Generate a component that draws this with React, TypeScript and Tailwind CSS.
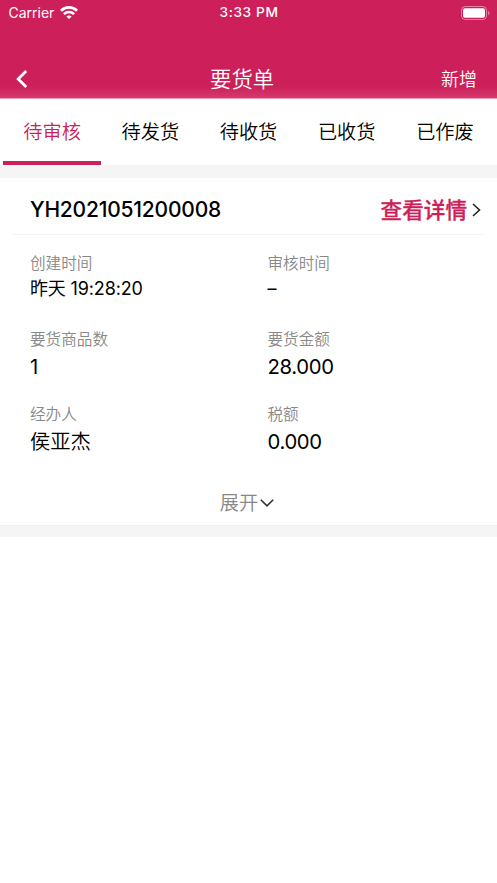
import type { ReactNode } from "react";

const tabs = ["待审核", "待发货", "待收货", "已收货", "已作废"];

const WifiIcon = () => (
  <svg className="h-[13px] w-[18px]" viewBox="0 0 18 13" fill="none" stroke="#fff" strokeWidth="2.7">
    <path d="M0.9 4.7C5.4 0.3 12.6 0.3 17.1 4.7" />
    <path d="M3.9 8.1C6.8 5.3 11.2 5.3 14.1 8.1" />
    <path d="M9 13L6.3 10.5C7.8 9.1 10.2 9.1 11.7 10.5Z" fill="#fff" stroke="none" />
  </svg>
);

const BatteryIcon = () => (
  <svg className="h-[14px] w-[29px]" viewBox="0 0 29 14" fill="none">
    <rect x="0.5" y="0.5" width="25" height="13" rx="3.7" stroke="#fff" strokeOpacity="0.45" />
    <rect x="2" y="2.3" width="22" height="9.4" rx="2" fill="#fff" />
    <path d="M27.2 4.7C28.9 5.6 28.9 8.4 27.2 9.3Z" fill="#fff" fillOpacity="0.5" />
  </svg>
);

const StatusBar = () => (
  <div className="flex h-[26px] items-center pb-[1px] pl-[8.5px] pr-[7px] leading-[25px]">
    <div className="flex w-[211px] items-center gap-[6px]">
      <span className="text-[14px]">Carrier</span>
      <WifiIcon />
    </div>
    <span className="text-[13.7px] font-medium tracking-[0.6px]">3:33 PM</span>
    <div className="flex flex-1 justify-end">
      <BatteryIcon />
    </div>
  </div>
);

const Header = () => (
  <header className="h-[98px] bg-[#cd1f59] bg-[linear-gradient(to_bottom,#cd1f59_88%,#d33a6d_100%)] text-white">
    <StatusBar />
    <div className="flex h-[72px] items-start px-[16px] pt-[34px]">
      <div className="flex h-[38px] w-[194px] items-center">
        <svg className="h-[18px] w-[12px]" viewBox="0 0 12 18" fill="none" stroke="#fff" strokeWidth="2.8">
          <path d="M10.2 1L2.2 9L10.2 17" />
        </svg>
      </div>
      <h1 className="text-[21.4px] font-[350] leading-[39px]">要货单</h1>
      <div className="flex-1 pr-[4px] text-right text-[18px] font-[350] leading-[40px]">新增</div>
    </div>
  </header>
);

const Tabs = () => (
  <nav className="flex h-[67px] border-t border-[#eaa0b9] px-[3px]">
    {tabs.map((tab, i) => (
      <div
        key={tab}
        className={
          i === 0
            ? "flex-1 border-b-4 border-[#cd1f59] text-center text-[19.2px] font-[350] leading-[67px] text-[#cd1f59]"
            : "flex-1 text-center text-[19.2px] font-[350] leading-[67px]"
        }
      >
        {tab}
      </div>
    ))}
  </nav>
);

const Field = ({ label, children }: { label: string; children: ReactNode }) => (
  <div className="h-[75.5px]">
    <div className="text-[15.6px] font-[350] leading-[24px] text-[#888]">{label}</div>
    <div className="text-[20.3px] leading-[29px] tracking-[-0.35px]">{children}</div>
  </div>
);

const OrderCard = () => (
  <section className="h-[347px] px-[12px]">
    <div className="flex h-[57px] items-center border-b border-[#f2f2f2] pl-[18px] pr-[4px] pt-[8px]">
      <span className="flex-1 text-[21px] font-medium tracking-[-0.2px]">YH2021051200008</span>
      <span className="text-[21.6px] font-medium text-[#cd1f59] [-webkit-text-stroke:0.3px_#cd1f59]">查看详情</span>
      <svg className="ml-[5px] h-[14px] w-[9px]" viewBox="0 0 9 14" fill="none" stroke="#222" strokeWidth="1.6">
        <path d="M1 1L7.5 7L1 13" />
      </svg>
    </div>
    <div className="grid grid-cols-[237.5px_1fr] pl-[18px] pt-[17px]">
      <Field label="创建时间">
        <span className="block text-[18px] leading-[25px] tracking-[-0.15px]">昨天 19:28:20</span>
      </Field>
      <Field label="审核时间">
        <span className="block text-[18px] leading-[25px]">–</span>
      </Field>
      <Field label="要货商品数">1</Field>
      <Field label="要货金额">28.000</Field>
      <Field label="经办人">
        <span className="font-[350] tracking-normal">侯亚杰</span>
      </Field>
      <Field label="税额">0.000</Field>
    </div>
    <div className="flex items-center justify-center gap-[2px] pr-[3px] pt-[8px] text-[19.2px] font-[350] leading-[32px] text-[#888]">
      展开
      <svg className="h-[8px] w-[14px]" viewBox="0 0 14 8" fill="none" stroke="#333" strokeWidth="1.6">
        <path d="M0.8 0.8L7 6.8L13.2 0.8" />
      </svg>
    </div>
  </section>
);

export default function App() {
  return (
    <div className="h-[883px] w-[497px] overflow-hidden bg-white font-['Inter','Noto_Sans_CJK_SC',sans-serif] text-black">
      <Header />
      <Tabs />
      <div className="h-[13px] bg-[#f5f5f5]" />
      <OrderCard />
      <div className="h-[12px] border-t border-[#eee] bg-[#f5f5f5]" />
    </div>
  );
}
